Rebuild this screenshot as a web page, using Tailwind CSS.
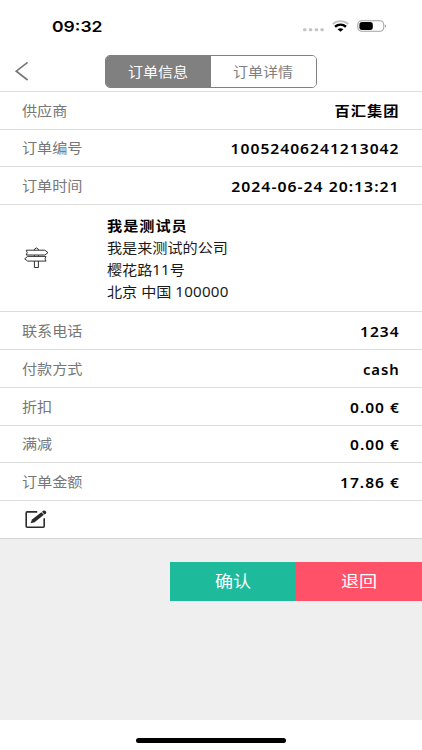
<!DOCTYPE html>
<html lang="zh-CN">
<head>
    <meta charset="UTF-8">
    <meta name="viewport" content="width=device-width, initial-scale=1.0">
    <title>订单信息</title>
    <script src="https://cdn.jsdelivr.net/npm/@tailwindcss/browser@4"></script>
</head>
<body class="bg-white antialiased">
    <div class="flex h-[750px] w-[422px] flex-col overflow-hidden bg-white font-['Noto_Sans','Noto_Sans_CJK_SC',sans-serif] text-[13.5px]">
        <!-- Status bar -->
        <div class="flex h-[52px] shrink-0 items-center justify-between pl-[52px] pr-[35px]">
            <span class="origin-left scale-x-[1.17] font-['Inter',sans-serif] text-[15px] font-semibold leading-none text-black">09:32</span>
            <div class="flex items-center">
                <svg class="mr-[8px] mt-[7px]" width="21" height="4" viewBox="0 0 21 4" fill="#c4c4c4">
                    <rect x="0" y="0.3" width="3.6" height="3" rx="1.4"/>
                    <rect x="5.8" y="0.3" width="3.6" height="3" rx="1.4"/>
                    <rect x="11.6" y="0.3" width="3.6" height="3" rx="1.4"/>
                    <rect x="17.3" y="0.3" width="3.6" height="3" rx="1.4"/>
                </svg>
                <svg class="mr-[8px]" width="17" height="12" viewBox="0 0 17 12" fill="none">
                    <path d="M0.7 4.1C5 0.2 12 0.2 16.3 4.1" stroke="#c2c2c2" stroke-width="1.7"/>
                    <path d="M3 6.8C6.2 4.1 10.8 4.1 14 6.8" stroke="#000" stroke-width="2.5"/>
                    <path d="M5.6 9.2C7.3 7.8 9.7 7.8 11.4 9.2L8.5 11.7Z" fill="#000"/>
                </svg>
                <svg width="30" height="12" viewBox="0 0 30 12">
                    <rect x="0.8" y="0.7" width="26" height="10.6" rx="4" fill="none" stroke="#a3a3a3" stroke-width="1.1"/>
                    <rect x="2.4" y="2.1" width="13.4" height="7.8" rx="2.6" fill="#000"/>
                    <path d="M28.2 4.4Q30.2 6 28.2 7.6Z" fill="#8e8e8e"/>
                </svg>
            </div>
        </div>

        <!-- Header -->
        <div class="flex h-10 shrink-0 border-b border-[#dcdcdc] pl-[14px] pt-[3px]">
            <svg class="mt-[6px]" width="16" height="20" viewBox="0 0 16 20" fill="none" stroke="#777" stroke-width="1.7">
                <path d="M13.6 1.3L2.3 10.2L13.6 19"/>
            </svg>
            <div class="ml-[75px] flex h-[32.5px] w-[212px] overflow-hidden rounded-[5px] border border-[#808080]">
                <div class="flex w-[105px] items-center justify-center bg-[#808080] pr-[1px] pt-[1px] text-white">
                    <span class="scale-x-[1.11]">订单信息</span>
                </div>
                <div class="flex flex-1 items-center justify-center bg-white pr-[2px] pt-[1px] text-[#808080]">
                    <span class="scale-x-[1.11]">订单详情</span>
                </div>
            </div>
        </div>

        <!-- Order fields -->
        <div class="flex h-[38px] shrink-0 items-center justify-between border-b border-[#dcdcdc] px-[22px] pt-[1px]">
            <span class="origin-left scale-x-[1.12] text-[#777]">供应商</span>
            <span class="origin-right scale-x-[1.13] font-bold tracking-[0.9px] text-black">百汇集团</span>
        </div>
        <div class="flex h-[37px] shrink-0 items-center justify-between border-b border-[#dcdcdc] pl-[22px] pr-[22.5px]">
            <span class="origin-left scale-x-[1.12] text-[#777]">订单编号</span>
            <span class="origin-right scale-x-[1.115] text-[14px] font-semibold tracking-[0.9px] text-black">10052406241213042</span>
        </div>
        <div class="flex h-[38px] shrink-0 items-center justify-between border-b border-[#dcdcdc] pl-[22px] pr-[22.5px] pt-[1px]">
            <span class="origin-left scale-x-[1.12] text-[#777]">订单时间</span>
            <span class="origin-right scale-x-[1.125] text-[14px] font-semibold tracking-[0.9px] text-black">2024-06-24 20:13:21</span>
        </div>

        <!-- Address -->
        <div class="flex h-[107px] shrink-0 items-center border-b border-[#dcdcdc] pl-6">
            <svg class="w-[25px]" width="25" height="22" viewBox="0 0 25 22" fill="#fff" stroke="#333" stroke-width="1">
                <path d="M10.4 3V2.2Q12.4 -0.4 14.4 2.2V20.5H10.4Z"/>
                <path d="M2.2 3.2H20.8L24 5.6L20.8 8H2.2L3.2 5.6Z"/>
                <path d="M22 9.4H3.7L0.7 11.8L3.7 14.1H22L21 11.8Z"/>
            </svg>
            <div class="ml-[57.5px] origin-left scale-x-[1.12] pt-[2px] leading-[22px] text-[#1a1a1a]">
                <p class="font-bold tracking-[0.9px] text-black">我是测试员</p>
                <p>我是来测试的公司</p>
                <p>樱花路11号</p>
                <p>北京 中国 <span class="tracking-[0.2px]">100000</span></p>
            </div>
        </div>

        <!-- Payment fields -->
        <div class="flex h-[38px] shrink-0 items-center justify-between border-b border-[#dcdcdc] pl-[22px] pr-[22.5px] pt-[1px]">
            <span class="origin-left scale-x-[1.12] text-[#777]">联系电话</span>
            <span class="origin-right scale-x-[1.11] text-[14px] font-semibold tracking-[0.9px] text-black">1234</span>
        </div>
        <div class="flex h-[38px] shrink-0 items-center justify-between border-b border-[#dcdcdc] pl-[22px] pr-[22px] pt-[1px]">
            <span class="origin-left scale-x-[1.12] text-[#777]">付款方式</span>
            <span class="origin-right scale-x-[1.06] text-[14px] font-semibold tracking-[0.9px] text-black">cash</span>
        </div>
        <div class="flex h-[38px] shrink-0 items-center justify-between border-b border-[#dcdcdc] pl-[22px] pr-[22.5px] pt-[1px]">
            <span class="origin-left scale-x-[1.12] text-[#777]">折扣</span>
            <span class="origin-right scale-x-[1.11] text-[14px] font-semibold tracking-[0.9px] text-black">0.00 €</span>
        </div>
        <div class="flex h-[37px] shrink-0 items-center justify-between border-b border-[#dcdcdc] pl-[22px] pr-[22.5px]">
            <span class="origin-left scale-x-[1.12] text-[#777]">满减</span>
            <span class="origin-right scale-x-[1.11] text-[14px] font-semibold tracking-[0.9px] text-black">0.00 €</span>
        </div>
        <div class="flex h-[38px] shrink-0 items-center justify-between border-b border-[#dcdcdc] pl-[22px] pr-[22.5px] pt-[1px]">
            <span class="origin-left scale-x-[1.12] text-[#777]">订单金额</span>
            <span class="origin-right scale-x-[1.11] text-[14px] font-semibold tracking-[0.9px] text-black">17.86 €</span>
        </div>
        <div class="flex h-[38px] shrink-0 items-center border-b border-[#d6d6d6] pl-[25px]">
            <svg width="22" height="19" viewBox="0 0 22 19" fill="none">
                <path d="M12.2 1.9H2.2Q1.2 1.9 1.2 2.9V16.3Q1.2 17.3 2.2 17.3H18.2Q19.2 17.3 19.2 16.3V8.3" stroke="#2b2b2b" stroke-width="1.6"/>
                <path d="M5.6 13.2L7 9.4L16.4 2.2L18.9 4.8L9.6 12.2Z" fill="#2b2b2b"/>
                <path d="M17 1.8L18.6 0.6Q19.6 0.1 20.8 1.2Q21.9 2.3 21 3.2L19.4 4.4Z" fill="#2b2b2b"/>
            </svg>
        </div>

        <!-- Actions -->
        <div class="flex flex-1 items-start justify-end bg-[#efefef] pt-[23px] text-base text-white">
            <button class="flex h-[39px] w-[126px] items-center justify-center bg-[#1dbb9c] pb-[1px]">
                <span class="scale-x-[1.13]">确认</span>
            </button>
            <button class="flex h-[39px] w-[126px] items-center justify-center bg-[#ff5268] pb-[1px]">
                <span class="scale-x-[1.13]">退回</span>
            </button>
        </div>

        <!-- Home indicator -->
        <div class="flex h-[30px] shrink-0 justify-center pt-[18px]">
            <div class="h-[5px] w-[150px] rounded-full bg-black"></div>
        </div>
    </div>
</body>
</html>
